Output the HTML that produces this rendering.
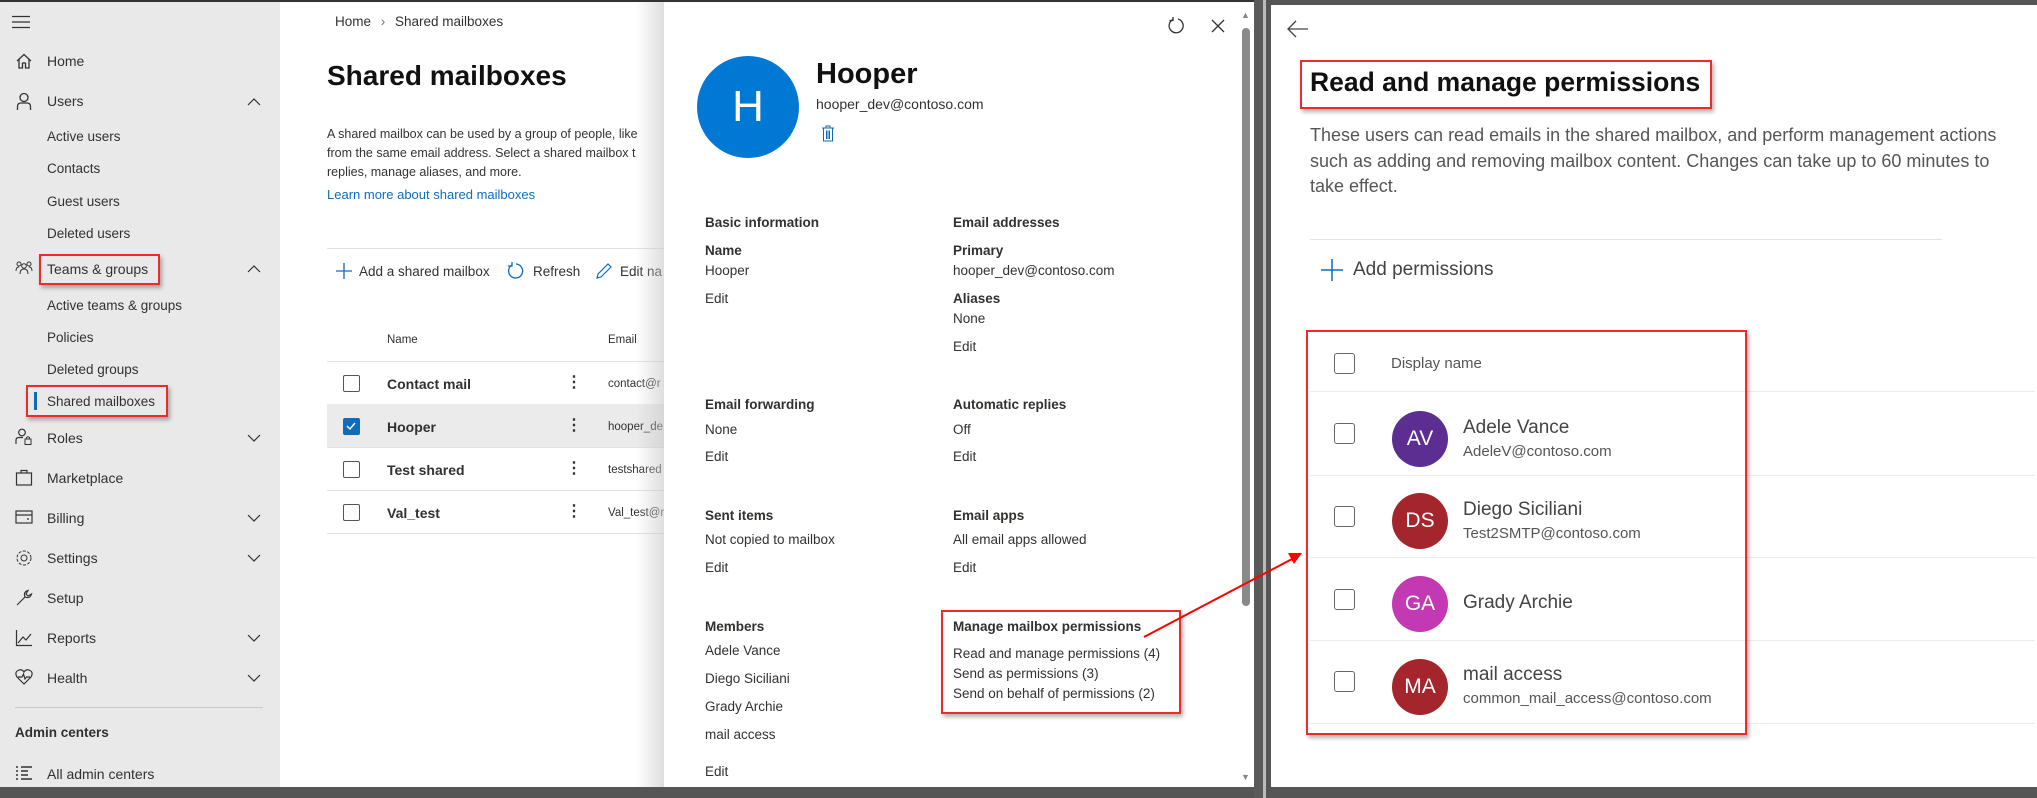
<!DOCTYPE html>
<html><head><meta charset="utf-8"><style>
*{margin:0;padding:0;box-sizing:border-box}
body{width:2037px;height:798px;overflow:hidden;background:#fff;font-family:"Liberation Sans",Arial,sans-serif;position:relative;color:#323130}
.a{position:absolute;white-space:nowrap}
.nav{font-size:14px;color:#323130}
.ico{position:absolute;left:15px;width:18px;height:18px}
.chev{position:absolute;left:247px;width:14px;height:10px}
.red{position:absolute;border:2.5px solid #ee2b2b;box-shadow:2px 3px 4px rgba(0,0,0,.3)}
.lnk{color:#0f6cbd}
.h{font-weight:bold;font-size:13.5px;color:#323130}
.t{font-size:13.5px;color:#323130}
.cb{position:absolute;width:17px;height:17px;border:1.5px solid #555;border-radius:2px;background:#fff}
.cb2{position:absolute;width:21px;height:21px;border:1.5px solid #666;border-radius:3px;background:#fff}
.av{position:absolute;width:56px;height:56px;border-radius:50%;color:#fff;font-size:21px;text-align:center;line-height:56px}
.rl{position:absolute;left:1310px;width:725px;height:1px;background:#ececec}
</style></head><body>
<!-- frame -->
<div class="a" style="left:0;top:0;width:1262px;height:2px;background:#333"></div>
<div class="a" style="left:0;top:787px;width:2037px;height:11px;background:#555"></div>
<div class="a" style="left:1254px;top:0;width:9px;height:798px;background:#5a5a5a"></div>
<div class="a" style="left:1263px;top:0;width:3px;height:798px;background:#bbb"></div>
<div class="a" style="left:1266px;top:0;width:5px;height:798px;background:#555"></div>
<div class="a" style="left:1266px;top:0;width:771px;height:5px;background:#555"></div>

<!-- sidebar -->
<div class="a" style="left:0;top:2px;width:280px;height:785px;background:#e9e9e9"></div>
<svg class="a" style="left:12px;top:15px" width="20" height="14"><path d="M0 1.5H18M0 7H18M0 12.5H18" stroke="#333" stroke-width="1.3"/></svg>
<div class="nav">
<svg class="ico" style="top:52px" viewBox="0 0 18 18"><path d="M2 9L9 2.5 16 9M4 7.5V16H7.5V11H10.5V16H14V7.5" fill="none" stroke="#333" stroke-width="1.3"/></svg>
<div class="a" style="left:47px;top:53px">Home</div>
<svg class="ico" style="top:92px" viewBox="0 0 18 18"><circle cx="9" cy="5.5" r="4" fill="none" stroke="#333" stroke-width="1.3"/><path d="M2.5 18V14.5Q2.5 11 6 11H12Q15.5 11 15.5 14.5V18" fill="none" stroke="#333" stroke-width="1.3"/></svg>
<div class="a" style="left:47px;top:93px">Users</div>
<svg class="chev" style="top:97px"><path d="M1 8L7 2 13 8" fill="none" stroke="#333" stroke-width="1.2"/></svg>
<div class="a" style="left:47px;top:129px;font-size:13.5px">Active users</div>
<div class="a" style="left:47px;top:161px;font-size:13.5px">Contacts</div>
<div class="a" style="left:47px;top:194px;font-size:13.5px">Guest users</div>
<div class="a" style="left:47px;top:226px;font-size:13.5px">Deleted users</div>
<svg class="ico" style="top:260px" viewBox="0 0 18 18"><circle cx="4" cy="4" r="2" fill="none" stroke="#333"/><circle cx="14" cy="4" r="2" fill="none" stroke="#333"/><circle cx="9" cy="6" r="2.3" fill="none" stroke="#333"/><path d="M1 11Q1 7 4 7M17 11Q17 7 14 7M5 14Q5 9 9 9Q13 9 13 14" fill="none" stroke="#333"/></svg>
<div class="a" style="left:47px;top:261px">Teams &amp; groups</div>
<svg class="chev" style="top:264px"><path d="M1 8L7 2 13 8" fill="none" stroke="#333" stroke-width="1.2"/></svg>
<div class="a" style="left:47px;top:298px;font-size:13.5px">Active teams &amp; groups</div>
<div class="a" style="left:47px;top:330px;font-size:13.5px">Policies</div>
<div class="a" style="left:47px;top:362px;font-size:13.5px">Deleted groups</div>
<div class="a" style="left:34px;top:392px;width:3px;height:18px;background:#0f6cbd"></div>
<div class="a" style="left:47px;top:394px;font-size:13.5px">Shared mailboxes</div>
<svg class="ico" style="top:428px" viewBox="0 0 18 18"><circle cx="7" cy="4.5" r="3.3" fill="none" stroke="#333" stroke-width="1.2"/><path d="M1 16V12Q1 9.5 4 9.5H8" fill="none" stroke="#333" stroke-width="1.2"/><rect x="10" y="11" width="6" height="5.5" fill="none" stroke="#333"/><path d="M11.5 11V9.5Q13 8 14.5 9.5V11" fill="none" stroke="#333"/></svg>
<div class="a" style="left:47px;top:430px">Roles</div>
<svg class="chev" style="top:433px"><path d="M1 2L7 8 13 2" fill="none" stroke="#333" stroke-width="1.2"/></svg>
<svg class="ico" style="top:468px" viewBox="0 0 18 18"><rect x="1.5" y="5" width="15" height="12" fill="none" stroke="#333" stroke-width="1.2"/><path d="M6 5V2.5H12V5" fill="none" stroke="#333" stroke-width="1.2"/></svg>
<div class="a" style="left:47px;top:470px">Marketplace</div>
<svg class="ico" style="top:508px" viewBox="0 0 18 18"><rect x="1" y="3" width="16" height="12" fill="none" stroke="#333" stroke-width="1.2"/><path d="M1 7H17M12 11H14" stroke="#333" stroke-width="1.2"/></svg>
<div class="a" style="left:47px;top:510px">Billing</div>
<svg class="chev" style="top:513px"><path d="M1 2L7 8 13 2" fill="none" stroke="#333" stroke-width="1.2"/></svg>
<svg class="ico" style="top:549px" viewBox="0 0 18 18"><circle cx="9" cy="9" r="3" fill="none" stroke="#333"/><circle cx="9" cy="9" r="7" fill="none" stroke="#333" stroke-dasharray="3 1.5"/></svg>
<div class="a" style="left:47px;top:550px">Settings</div>
<svg class="chev" style="top:553px"><path d="M1 2L7 8 13 2" fill="none" stroke="#333" stroke-width="1.2"/></svg>
<svg class="ico" style="top:589px" viewBox="0 0 18 18"><path d="M2 16L10 8Q8 3 13 1.5L11 5 13 7 16.5 5Q15 10 10 8" fill="none" stroke="#333" stroke-width="1.2"/></svg>
<div class="a" style="left:47px;top:590px">Setup</div>
<svg class="ico" style="top:629px" viewBox="0 0 18 18"><path d="M1.5 1V16.5H17M3 14L8 8 11 11 16 5" fill="none" stroke="#333" stroke-width="1.2"/></svg>
<div class="a" style="left:47px;top:630px">Reports</div>
<svg class="chev" style="top:633px"><path d="M1 2L7 8 13 2" fill="none" stroke="#333" stroke-width="1.2"/></svg>
<svg class="ico" style="top:668px" viewBox="0 0 18 18"><path d="M9 16L2 9Q-1 4 4 2Q7 1 9 4Q11 1 14 2Q19 4 16 9Z M3 9H7L8.5 6 10 11 11.5 9H15" fill="none" stroke="#333" stroke-width="1.2"/></svg>
<div class="a" style="left:47px;top:670px">Health</div>
<svg class="chev" style="top:673px"><path d="M1 2L7 8 13 2" fill="none" stroke="#333" stroke-width="1.2"/></svg>
<div class="a" style="left:15px;top:707px;width:248px;height:1px;background:#c8c8c8"></div>
<div class="a" style="left:15px;top:725px;font-weight:bold;font-size:13.5px">Admin centers</div>
<svg class="ico" style="top:765px" viewBox="0 0 18 18"><path d="M1 2H3M1 6H3M1 10H3M1 14H3M6 2H17M6 6H13M6 10H13M6 14H17" stroke="#333" stroke-width="1.4"/></svg>
<div class="a" style="left:47px;top:766px">All admin centers</div>
</div>
<div class="red" style="left:39px;top:254px;width:121px;height:31px"></div>
<div class="red" style="left:26px;top:385px;width:142px;height:32px"></div>

<!-- main -->
<div class="a" style="left:335px;top:14px;font-size:13.5px">Home <span style="color:#777;margin:0 6px">&#x203A;</span> Shared mailboxes</div>
<div class="a" style="left:327px;top:60px;font-size:28px;font-weight:bold;color:#111">Shared mailboxes</div>
<div class="a" style="left:327px;top:125px;font-size:12.5px;line-height:19px;color:#333">A shared mailbox can be used by a group of people, like<br>from the same email address. Select a shared mailbox t<br>replies, manage aliases, and more.</div>
<div class="a lnk" style="left:327px;top:187px;font-size:13px">Learn more about shared mailboxes</div>
<div class="a" style="left:327px;top:248px;width:340px;height:1px;background:#e1e1e1"></div>
<svg class="a" style="left:335px;top:262px" width="18" height="18"><path d="M9 1V17M1 9H17" stroke="#0f6cbd" stroke-width="1.3"/></svg>
<div class="a" style="left:359px;top:264px;font-size:13.5px">Add a shared mailbox</div>
<svg class="a" style="left:507px;top:262px" width="18" height="18"><path d="M5 3A7 7 0 1 0 9 2" fill="none" stroke="#0f6cbd" stroke-width="1.3"/><path d="M5 0V4H1" fill="none" stroke="#0f6cbd" stroke-width="1.3"/></svg>
<div class="a" style="left:533px;top:264px;font-size:13.5px">Refresh</div>
<svg class="a" style="left:595px;top:262px" width="18" height="18"><path d="M2 16L3 12 13 2 16 5 6 15Z" fill="none" stroke="#0f6cbd" stroke-width="1.2"/></svg>
<div class="a" style="left:620px;top:264px;font-size:13.5px">Edit na</div>
<div class="a" style="left:387px;top:334px;font-size:11.5px">Name</div>
<div class="a" style="left:608px;top:334px;font-size:11.5px">Email</div>
<div class="a" style="left:327px;top:361px;width:340px;height:1px;background:#e1e1e1"></div>
<div class="a" style="left:327px;top:404px;width:340px;height:43px;background:#ebebeb"></div>
<div class="a" style="left:327px;top:447px;width:340px;height:1px;background:#e1e1e1"></div>
<div class="a" style="left:327px;top:490px;width:340px;height:1px;background:#e1e1e1"></div>
<div class="a" style="left:327px;top:533px;width:340px;height:1px;background:#e1e1e1"></div>
<div class="cb" style="left:343px;top:375px"></div>
<div class="cb" style="left:343px;top:418px;background:#0f6cbd;border-color:#0f6cbd"><svg width="14" height="14" style="position:absolute;left:0;top:0"><path d="M3 7L6 10 11 4" fill="none" stroke="#fff" stroke-width="1.4"/></svg></div>
<div class="cb" style="left:343px;top:461px"></div>
<div class="cb" style="left:343px;top:504px"></div>
<div class="a" style="left:387px;top:376px;font-size:14px;font-weight:bold">Contact mail</div>
<div class="a" style="left:387px;top:419px;font-size:14px;font-weight:bold">Hooper</div>
<div class="a" style="left:387px;top:462px;font-size:14px;font-weight:bold">Test shared</div>
<div class="a" style="left:387px;top:505px;font-size:14px;font-weight:bold">Val_test</div>
<div class="a" style="left:566px;top:361px;font-size:16px;font-weight:bold;line-height:43px">&#x22EE;<br>&#x22EE;<br>&#x22EE;<br>&#x22EE;</div>
<div class="a" style="left:608px;top:363px;font-size:11.5px;line-height:43px">contact@r<br>hooper_de<br>testshared<br>Val_test@r</div>
<div class="a" style="left:636px;top:2px;width:28px;height:785px;background:linear-gradient(90deg,rgba(255,255,255,0),rgba(200,200,200,.6))"></div>

<!-- panel 1 -->
<div class="a" style="left:664px;top:2px;width:590px;height:785px;background:#fff;border-radius:0 0 8px 0"></div>
<div class="a" style="left:1242px;top:28px;width:8px;height:578px;background:#8a8a8a;border-radius:4px"></div>
<div class="a" style="left:1241px;top:10px;font-size:9px;color:#888">&#9650;</div>
<div class="a" style="left:1241px;top:772px;font-size:9px;color:#888">&#9660;</div>
<svg class="a" style="left:1168px;top:17px" width="18" height="18"><path d="M5 2.5A7 7 0 1 0 10 2" fill="none" stroke="#333" stroke-width="1.3"/><path d="M5 0V3.5H1.5" fill="none" stroke="#333" stroke-width="1.3"/></svg>
<svg class="a" style="left:1211px;top:19px" width="14" height="14"><path d="M1 1L13 13M13 1L1 13" stroke="#333" stroke-width="1.3"/></svg>
<div class="av" style="left:697px;top:56px;width:102px;height:102px;line-height:102px;background:#0078d4;font-size:44px">H</div>
<div class="a" style="left:816px;top:58px;font-size:29px;font-weight:bold;color:#111">Hooper</div>
<div class="a" style="left:816px;top:96px;font-size:14px">hooper_dev@contoso.com</div>
<svg class="a" style="left:821px;top:125px" width="14" height="17"><path d="M1 3H13M5 3V1H9V3M2.5 3V16H11.5V3M5.5 5.5V14M7 5.5V14M8.5 5.5V14" fill="none" stroke="#0f6cbd" stroke-width="1"/></svg>

<div class="a h" style="left:705px;top:215px">Basic information</div>
<div class="a h" style="left:705px;top:243px">Name</div>
<div class="a t" style="left:705px;top:263px">Hooper</div>
<div class="a lnk t" style="left:705px;top:291px">Edit</div>
<div class="a h" style="left:953px;top:215px">Email addresses</div>
<div class="a h" style="left:953px;top:243px">Primary</div>
<div class="a t" style="left:953px;top:263px">hooper_dev@contoso.com</div>
<div class="a h" style="left:953px;top:291px">Aliases</div>
<div class="a t" style="left:953px;top:311px">None</div>
<div class="a lnk t" style="left:953px;top:339px">Edit</div>

<div class="a h" style="left:705px;top:397px">Email forwarding</div>
<div class="a t" style="left:705px;top:422px">None</div>
<div class="a lnk t" style="left:705px;top:449px">Edit</div>
<div class="a h" style="left:953px;top:397px">Automatic replies</div>
<div class="a t" style="left:953px;top:422px">Off</div>
<div class="a lnk t" style="left:953px;top:449px">Edit</div>

<div class="a h" style="left:705px;top:508px">Sent items</div>
<div class="a t" style="left:705px;top:532px">Not copied to mailbox</div>
<div class="a lnk t" style="left:705px;top:560px">Edit</div>
<div class="a h" style="left:953px;top:508px">Email apps</div>
<div class="a t" style="left:953px;top:532px">All email apps allowed</div>
<div class="a lnk t" style="left:953px;top:560px">Edit</div>

<div class="a h" style="left:705px;top:619px">Members</div>
<div class="a t" style="left:705px;top:643px">Adele Vance</div>
<div class="a t" style="left:705px;top:671px">Diego Siciliani</div>
<div class="a t" style="left:705px;top:699px">Grady Archie</div>
<div class="a t" style="left:705px;top:727px">mail access</div>
<div class="a lnk t" style="left:705px;top:764px">Edit</div>
<div class="a h" style="left:953px;top:619px">Manage mailbox permissions</div>
<div class="a lnk t" style="left:953px;top:646px">Read and manage permissions (4)</div>
<div class="a lnk t" style="left:953px;top:666px">Send as permissions (3)</div>
<div class="a lnk t" style="left:953px;top:686px">Send on behalf of permissions (2)</div>
<div class="red" style="left:941px;top:610px;width:240px;height:104px"></div>

<!-- right panel -->
<svg class="a" style="left:1287px;top:20px" width="22" height="18"><path d="M21 9H2M9 1L1 9 9 17" fill="none" stroke="#444" stroke-width="1.3"/></svg>
<div class="a" style="left:1310px;top:67px;font-size:26.5px;font-weight:bold;color:#111">Read and manage permissions</div>
<div class="red" style="left:1300px;top:60px;width:412px;height:49px"></div>
<div class="a" style="left:1310px;top:123px;font-size:18px;line-height:25.5px;color:#555">These users can read emails in the shared mailbox, and perform management actions<br>such as adding and removing mailbox content. Changes can take up to 60 minutes to<br>take effect.</div>
<div class="a" style="left:1310px;top:239px;width:632px;height:1px;background:#e3e3e3"></div>
<svg class="a" style="left:1321px;top:259px" width="22" height="22"><path d="M11 0V22M0 11H22" stroke="#0f6cbd" stroke-width="1.5"/></svg>
<div class="a" style="left:1353px;top:259px;font-size:19px;color:#444">Add permissions</div>
<div class="cb2" style="left:1334px;top:353px"></div>
<div class="a" style="left:1391px;top:355px;font-size:15px;color:#555">Display name</div>
<div class="rl" style="top:391px"></div>
<div class="rl" style="top:475px"></div>
<div class="rl" style="top:557px"></div>
<div class="rl" style="top:640px"></div>
<div class="rl" style="top:723px"></div>
<div class="cb2" style="left:1334px;top:423px"></div>
<div class="cb2" style="left:1334px;top:506px"></div>
<div class="cb2" style="left:1334px;top:589px"></div>
<div class="cb2" style="left:1334px;top:671px"></div>
<div class="av" style="left:1392px;top:411px;background:#5c2e91">AV</div>
<div class="av" style="left:1392px;top:493px;background:#a4262c">DS</div>
<div class="av" style="left:1392px;top:576px;background:#c239b3">GA</div>
<div class="av" style="left:1392px;top:659px;background:#a4262c">MA</div>
<div class="a" style="left:1463px;top:417px;font-size:19px;color:#444">Adele Vance</div>
<div class="a" style="left:1463px;top:443px;font-size:15px;color:#555">AdeleV@contoso.com</div>
<div class="a" style="left:1463px;top:499px;font-size:19px;color:#444">Diego Siciliani</div>
<div class="a" style="left:1463px;top:525px;font-size:15px;color:#555">Test2SMTP@contoso.com</div>
<div class="a" style="left:1463px;top:592px;font-size:19px;color:#444">Grady Archie</div>
<div class="a" style="left:1463px;top:664px;font-size:19px;color:#444">mail access</div>
<div class="a" style="left:1463px;top:690px;font-size:15px;color:#555">common_mail_access@contoso.com</div>
<div class="red" style="left:1306px;top:330px;width:441px;height:405px"></div>

<!-- arrow -->
<svg class="a" style="left:0;top:0" width="2037" height="798"><line x1="1144" y1="637" x2="1294" y2="558" stroke="#f00" stroke-width="2"/><path d="M1302 553L1288 553 1294 564Z" fill="#f00"/></svg>
</body></html>
